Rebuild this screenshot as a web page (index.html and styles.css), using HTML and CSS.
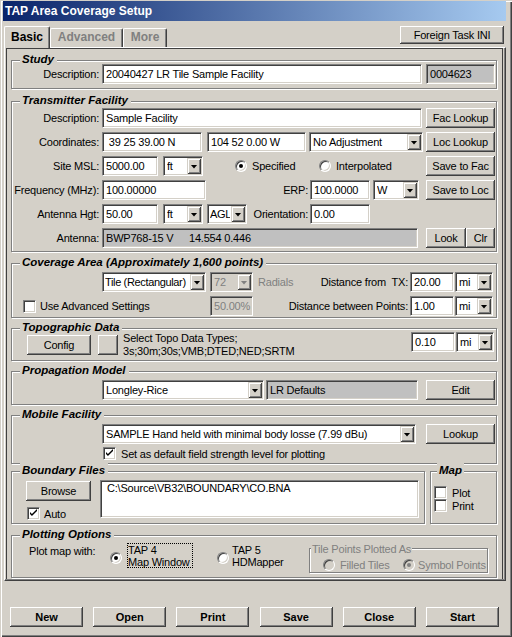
FILE: index.html
```html
<!DOCTYPE html>
<html>
<head>
<meta charset="utf-8">
<title>TAP Area Coverage Setup</title>
<link rel="stylesheet" href="styles.css">
</head>
<body>
<div class="window">
  <div class="titlebar">TAP Area Coverage Setup</div>
  <div class="tabrow">
    <div class="tab active w46">Basic</div>
    <div class="tab off w73">Advanced</div>
    <div class="tab off w44">More</div>
    <button class="btn foreign">Foreign Task INI</button>
  </div>
  <div class="panel">
    <!-- Study -->
    <div class="group g-study">
      <span class="gt">Study</span>
      <div class="row">
        <span class="lbl">Description:</span>
        <span class="tb w320">20040427 LR Tile Sample Facility</span>
        <span class="tb ro w69 ml4">0004623</span>
      </div>
    </div>

    <!-- Transmitter Facility -->
    <div class="group g-trans">
      <span class="gt">Transmitter Facility</span>
      <div class="row">
        <span class="lbl">Description:</span>
        <span class="tb w320">Sample Facility</span>
        <button class="btn w69 ml4">Fac Lookup</button>
      </div>
      <div class="row mt4">
        <span class="lbl">Coordinates:</span>
        <span class="tb w100">&nbsp;39 25 39.00 N</span>
        <span class="tb w99 ml5">104 52 0.00 W</span>
        <span class="cb w114 ml3"><span class="cbt">No Adjustment</span><span class="dd"></span></span>
        <button class="btn w69 ml3">Loc Lookup</button>
      </div>
      <div class="row mt4">
        <span class="lbl">Site MSL:</span>
        <span class="tb w56">5000.00</span>
        <span class="cb w40 ml5"><span class="cbt">ft</span><span class="dd"></span></span>
        <span class="opt w116 pl32"><span class="radio on"></span><span class="ml5">Specified</span></span>
        <span class="opt w107"><span class="radio"></span><span class="ml5">Interpolated</span></span>
        <button class="btn w69">Save to Fac</button>
      </div>
      <div class="row mt4">
        <span class="lbl">Frequency (MHz):</span>
        <span class="tb w104">100.00000</span>
        <span class="rl w102">ERP:</span>
        <span class="tb w60 ml2">100.0000</span>
        <span class="cb w46 ml3"><span class="cbt">W</span><span class="dd"></span></span>
        <button class="btn w69 ml7">Save to Loc</button>
      </div>
      <div class="row mt4">
        <span class="lbl">Antenna Hgt:</span>
        <span class="tb w56">50.00</span>
        <span class="cb w40 ml5"><span class="cbt">ft</span><span class="dd"></span></span>
        <span class="cb narrow w40 ml4"><span class="cbt">AGL</span><span class="dd"></span></span>
        <span class="rl w61">Orientation:</span>
        <span class="tb w60 ml2">0.00</span>
      </div>
      <div class="row mt4">
        <span class="lbl">Antenna:</span>
        <span class="tb ro w316"><span class="ant1">BWP768-15 V</span>14.554 0.446</span>
        <button class="btn w40 ml8">Look</button>
        <button class="btn w29">Clr</button>
      </div>
    </div>

    <!-- Coverage Area -->
    <div class="group g-cov">
      <span class="gt">Coverage Area (Approximately 1,600 points)</span>
      <div class="row">
        <span class="w90"></span>
        <span class="cb narrow w104"><span class="cbt">Tile (Rectangular)</span><span class="dd"></span></span>
        <span class="cb dis w43 ml4"><span class="cbt">72</span><span class="dd"></span></span>
        <span class="graytxt w45 pl5">Radials</span>
        <span class="rl w110 pre">Distance from  TX:</span>
        <span class="tb w44 ml2">20.00</span>
        <span class="cb w38 ml1"><span class="cbt">mi</span><span class="dd"></span></span>
      </div>
      <div class="row mt4">
        <span class="opt w198 pl11"><span class="check"></span><span class="ml4">Use Advanced Settings</span></span>
        <span class="tb dis w43">50.00%</span>
        <span class="rl w155">Distance between Points:</span>
        <span class="tb w44 ml2">1.00</span>
        <span class="cb w38 ml1"><span class="cbt">mi</span><span class="dd"></span></span>
      </div>
    </div>

    <!-- Topographic Data -->
    <div class="group g-topo">
      <span class="gt">Topographic Data</span>
      <div class="row top">
        <button class="btn w64 ml15 mt3">Config</button>
        <button class="btn w20 ml7 mt3"></button>
        <span class="topo-lbl ml5">Select Topo Data Types;<br>3s;30m;30s;VMB;DTED;NED;SRTM</span>
        <span class="tb w44 mlauto">0.10</span>
        <span class="cb w38 ml1 mr2"><span class="cbt">mi</span><span class="dd"></span></span>
      </div>
    </div>

    <!-- Propagation Model -->
    <div class="group g-prop">
      <span class="gt">Propagation Model</span>
      <div class="row">
        <span class="w90"></span>
        <span class="cb w162"><span class="cbt">Longley-Rice</span><span class="dd"></span></span>
        <span class="tb ro w152 ml2">LR Defaults</span>
        <button class="btn w69 ml8">Edit</button>
      </div>
    </div>

    <!-- Mobile Facility -->
    <div class="group g-mob">
      <span class="gt">Mobile Facility</span>
      <div class="row">
        <span class="w90"></span>
        <span class="cb w314"><span class="cbt">SAMPLE Hand held with minimal body losse (7.99 dBu)</span><span class="dd"></span></span>
        <button class="btn w69 ml10">Lookup</button>
      </div>
      <div class="row r13 mt3">
        <span class="w91"></span>
        <span class="check on"></span>
        <span class="ml5">Set as default field strength level for plotting</span>
      </div>
    </div>

    <!-- Boundary + Map -->
    <div class="pair">
      <div class="group g-bound">
        <span class="gt">Boundary Files</span>
        <div class="row top">
          <div class="bcol">
            <button class="btn w65">Browse</button>
            <span class="opt r13 mt6 pl1"><span class="check on"></span><span class="ml4">Auto</span></span>
          </div>
          <div class="tb area w319 ml9">C:\Source\VB32\BOUNDARY\CO.BNA</div>
        </div>
      </div>
      <div class="group g-map">
        <span class="gt map-t">Map</span>
        <div class="row r13"><span class="check ml3"></span><span class="ml5">Plot</span></div>
        <div class="row r13"><span class="check ml3"></span><span class="ml5">Print</span></div>
      </div>
    </div>

    <!-- Plotting Options -->
    <div class="group g-plot">
      <span class="gt">Plotting Options</span>
      <div class="row top">
        <span class="pmw">Plot map with:</span>
        <span class="radio on mt9"></span>
        <span class="focus ml5">TAP 4<br>Map Window</span>
        <span class="radio mt9 ml24"></span>
        <span class="two w77 ml3">TAP 5<br>HDMapper</span>
        <div class="group tile">
          <span class="gt tile-t">Tile Points Plotted As</span>
          <div class="row r13">
            <span class="opt w80 ml13 graytxt"><span class="radio dis"></span><span class="ml5">Filled Tiles</span></span>
            <span class="opt graytxt"><span class="radio dis on"></span><span class="ml3">Symbol Points</span></span>
          </div>
        </div>
      </div>
    </div>
  </div>

  <div class="actions">
    <button class="btn act">New</button>
    <button class="btn act">Open</button>
    <button class="btn act">Print</button>
    <button class="btn act">Save</button>
    <button class="btn act">Close</button>
    <button class="btn act">Start</button>
  </div>
</div>
</body>
</html>
```
FILE: styles.css
```css
* { box-sizing: border-box; }
html, body { margin: 0; padding: 0; }
body {
  width: 512px; height: 637px; overflow: hidden;
  background: #d4d0c8;
  font-family: "Liberation Sans", Arial, sans-serif;
  font-size: 11px; letter-spacing: -0.2px; color: #000;
}
.window {
  width: 512px; height: 637px;
  padding: 1px 6px 0 3px;
  background: #d4d0c8;
  box-shadow: inset 1px 1px #d4d0c8, inset 2px 2px #fff, inset -1px -1px #404040, inset -2px -2px #808080;
  display: flex; flex-direction: column;
}
.titlebar {
  height: 20px; line-height: 20px; padding-left: 2px;
  background: linear-gradient(to right, #0a246a, #a6caf0);
  color: #fff; font-weight: bold; font-size: 12px; letter-spacing: 0;
}
.tabrow {
  height: 26px; display: flex; align-items: flex-end; padding-left: 1px;
}
.tab {
  height: 19px; text-align: center; line-height: 17px;
  font-weight: bold; font-size: 12px; letter-spacing: 0;
  border-top: 1px solid #fff; border-left: 1px solid #fff; border-right: 1px solid #404040;
  box-shadow: inset -1px 0 #808080;
  border-radius: 2px 2px 0 0;
  background: #d4d0c8;
}
.tab.active { height: 22px; margin-bottom: -1px; position: relative; z-index: 1; line-height: 20px; }
.tab.off { color: #808080; }

.panel {
  margin-left: 1px; width: 502px; height: 534px;
  border-left: 1px solid #fff; border-top: 1px solid #fff;
  border-right: 1px solid #404040; border-bottom: 1px solid #404040;
  box-shadow: inset -1px -1px #808080, inset -2px 0 #d4d0c8, inset -3px 0 #404040,
              inset 1px 0 #d4d0c8, inset 2px 1px #404040;
  padding-left: 6px;
}

.group {
  position: relative; width: 486px;
  border: 1px solid #808080;
  box-shadow: inset 1px 1px #fff, 1px 1px #fff;
}
.gt {
  position: absolute; top: -9px; left: 8px;
  padding: 0 3px 0 2px; background: #d4d0c8;
  font-style: italic; font-weight: bold; font-size: 11.5px; line-height: 14px; letter-spacing: 0;
  white-space: nowrap;
}
.g-study { margin-top: 12px; height: 29px; padding-top: 3px; }
.g-trans { margin-top: 12px; height: 151px; padding-top: 6px; }
.g-cov { margin-top: 11px; height: 55px; padding-top: 8px; }
.g-topo { margin-top: 10px; height: 33px; padding-top: 3px; }
.g-prop { margin-top: 10px; height: 34px; padding-top: 8px; }
.g-mob { margin-top: 10px; height: 49px; padding-top: 8px; }
.pair { display: flex; margin-top: 7px; gap: 5px; }
.g-bound { width: 414px; height: 53px; padding-top: 8px; }
.g-map { width: 67px; height: 53px; padding-top: 14px; }
.map-t { left: 6px; padding: 0 2px; }
.g-plot { margin-top: 11px; height: 43px; padding-top: 7px; }

.row { display: flex; align-items: center; height: 20px; white-space: nowrap; }
.row.top { align-items: flex-start; height: auto; }
.r13 { height: 13px; }
.lbl { width: 87px; margin-right: 3px; text-align: right; }
.rl { text-align: right; }
.pre { white-space: pre; }
.opt { display: flex; align-items: center; }

.tb {
  height: 20px; background: #fff;
  border: 1px solid; border-color: #808080 #fff #fff #808080;
  box-shadow: inset 1px 1px #404040, inset -1px -1px #d4d0c8;
  padding: 0 3px; line-height: 18px; white-space: nowrap; overflow: hidden;
}
.tb.ro { background: #c0c0c0; }
.tb.dis { background: #d4d0c8; color: #808080; }
.ant1 { display: inline-block; width: 83px; }
.area { height: 38px; line-height: 13px; padding: 1px 6px; }

.cb {
  height: 20px; display: flex; align-items: center; background: #fff;
  border: 1px solid; border-color: #808080 #fff #fff #808080;
  box-shadow: inset 1px 1px #404040, inset -1px -1px #d4d0c8;
  padding-left: 3px;
}
.cb.narrow { padding-left: 2px; letter-spacing: -0.35px; }
.cbt { flex: 1; overflow: hidden; white-space: nowrap; line-height: 18px; }
.dd {
  width: 14px; height: 16px; margin: 1px; flex: none;
  background: #d4d0c8;
  box-shadow: inset 1px 1px #d4d0c8, inset -1px -1px #404040, inset 2px 2px #fff, inset -2px -2px #808080;
  display: flex; align-items: center; justify-content: center;
}
.dd::after {
  content: ""; width: 7px; height: 4px; background: #000;
  clip-path: polygon(0 0, 100% 0, 50% 100%);
  margin-top: 1px;
}
.cb.dis { background: #d4d0c8; color: #808080; }
.cb.dis .dd::after { background: #808080; }

.btn {
  height: 20px; padding: 0; border: 0; margin: 0;
  background: #d4d0c8; color: #000;
  font: inherit; letter-spacing: inherit;
  box-shadow: inset -1px -1px #404040, inset 1px 1px #fff, inset -2px -2px #808080;
  text-align: center; flex: none;
}
.foreign { width: 104px; height: 18px; margin-left: auto; margin-right: 2px; align-self: flex-start; margin-top: 5px; }

.radio {
  width: 12px; height: 12px; border-radius: 50%; flex: none;
  background: #fff; position: relative;
  border: 1px solid; border-color: #808080 #fff #fff #808080;
  box-shadow: inset 1px 1px #404040, inset -1px -1px #d4d0c8;
}
.radio.on::after {
  content: ""; position: absolute; left: 3px; top: 3px;
  width: 4px; height: 4px; border-radius: 50%; background: #000;
}
.radio.dis { background: #d4d0c8; }
.radio.dis.on::after { background: #808080; }

.check {
  width: 13px; height: 13px; flex: none; background: #fff; position: relative;
  border: 1px solid; border-color: #808080 #fff #fff #808080;
  box-shadow: inset 1px 1px #404040, inset -1px -1px #d4d0c8;
}
.check.on::after {
  content: ""; position: absolute; left: 2px; top: 1px;
  width: 7px; height: 7px;
  background: #000;
  clip-path: polygon(0 43%, 28% 71%, 100% 0, 100% 29%, 28% 100%, 0 71%);
}

.graytxt { color: #808080; }
.topo-lbl { line-height: 13px; white-space: nowrap; }
.bcol { display: flex; flex-direction: column; margin-left: 14px; margin-top: 1px; }
.pmw { width: 98px; padding-left: 17px; margin-top: 2px; line-height: 13px; }
.focus { width: 66px; height: 25px; border: 1px dotted #000; line-height: 12px; padding-top: 0; }
.two { line-height: 12px; margin-top: 1px; }
.tile { width: 179px; height: 25px; margin-top: 5px; padding-top: 9px; box-shadow: inset 1px 1px #fff, 1px 1px #fff; }
.tile-t { top: -7px; left: 1px; padding: 0 1px; font-style: normal; font-weight: normal; font-size: 11px; color: #808080; letter-spacing: -0.2px; }

.actions {
  display: flex; justify-content: space-between;
  margin-top: 26px; padding-left: 7px; width: 496px;
}
.act { width: 73px; font-weight: bold; font-size: 11px; letter-spacing: 0; }

.w20 { width: 20px; } .w29 { width: 29px; } .w38 { width: 38px; } .w40 { width: 40px; }
.w43 { width: 43px; } .w44 { width: 44px; } .w45 { width: 45px; } .w46 { width: 46px; }
.w56 { width: 56px; } .w60 { width: 60px; } .w61 { width: 61px; } .w64 { width: 64px; }
.w65 { width: 65px; } .w69 { width: 69px; } .w73 { width: 73px; } .w77 { width: 77px; }
.w80 { width: 80px; } .w90 { width: 90px; flex: none; } .w91 { width: 91px; flex: none; }
.w99 { width: 99px; } .w100 { width: 100px; } .w102 { width: 102px; } .w104 { width: 104px; }
.w107 { width: 107px; } .w110 { width: 110px; } .w114 { width: 114px; } .w116 { width: 116px; }
.w152 { width: 152px; } .w155 { width: 155px; } .w162 { width: 162px; } .w198 { width: 198px; }
.w314 { width: 314px; } .w316 { width: 316px; } .w319 { width: 319px; } .w320 { width: 320px; }
.ml1 { margin-left: 1px; } .ml2 { margin-left: 2px; } .ml3 { margin-left: 3px; } .ml4 { margin-left: 4px; }
.ml5 { margin-left: 5px; } .ml7 { margin-left: 7px; } .ml8 { margin-left: 8px; } .ml9 { margin-left: 9px; }
.ml10 { margin-left: 10px; } .ml13 { margin-left: 13px; } .ml15 { margin-left: 15px; } .ml24 { margin-left: 24px; }
.mlauto { margin-left: auto; } .mr2 { margin-right: 2px; }
.mt3 { margin-top: 3px; } .mt4 { margin-top: 4px; } .mt6 { margin-top: 6px; } .mt9 { margin-top: 9px; }
.pl1 { padding-left: 1px; } .pl5 { padding-left: 5px; } .pl11 { padding-left: 11px; } .pl32 { padding-left: 32px; }
```
